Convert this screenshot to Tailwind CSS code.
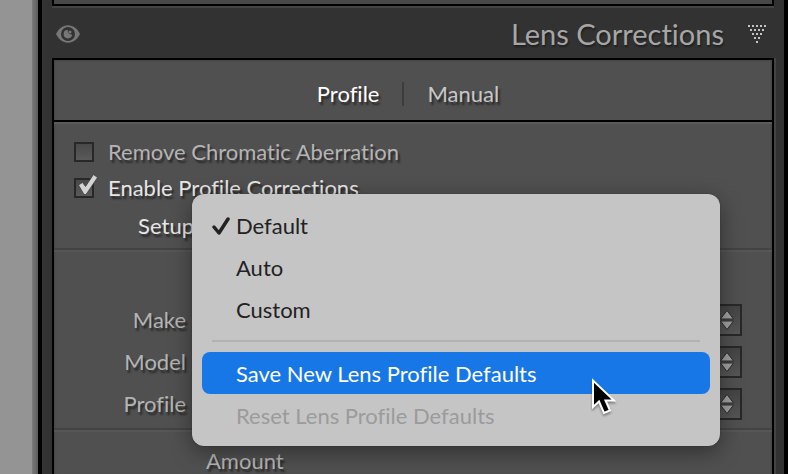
<!DOCTYPE html>
<html lang="en">
<head>
  <meta charset="UTF-8" />
  <meta name="viewport" content="width=device-width, initial-scale=1.0" />
  <title>Lens Corrections</title>
  <script src="https://cdn.jsdelivr.net/npm/@tailwindcss/browser@4"></script>
</head>
<body class="h-screen overflow-hidden flex bg-[#323232] font-['Lato','Open_Sans',sans-serif] [font-variant-ligatures:none] text-[22px] leading-[30px] text-[#b4b4b4]">

  <!-- Canvas edge -->
  <div class="w-8 shrink-0 bg-[#949494]"></div>
  <div class="w-1.5 shrink-0 bg-linear-to-r from-[#7c7c7c] to-[#5c5c5c]"></div>

  <main class="grow min-w-0 flex flex-col border-x-4 border-black px-2.5">

    <!-- Bottom of the panel above -->
    <div class="h-1.5 shrink-0 bg-[#484848] border-2 border-t-0 border-black"></div>
    <div class="h-0.5 shrink-0 bg-[#444444]"></div>

    <!-- Panel header -->
    <header class="h-[50px] shrink-0 flex items-center justify-between pt-0.5 pl-1 pr-2">
      <button type="button" aria-label="Toggle panel">
        <svg class="block w-6 h-[18px]" viewBox="0 0 24 18">
          <path d="M0 9C2.5 4 6.5 0.3 12 0.3S21.500 4 24 9C21.500 14 17.500 17.700 12 17.700S2.500 14 0 9Z" fill="#777777" />
          <circle cx="12" cy="9" r="7" fill="#323232" />
          <path d="M11.500 4.800A4.300 4.300 0 1 0 16.200 9.300C14.800 10.200 11.800 9.300 11.500 4.800Z" fill="#777777" />
          <circle cx="14" cy="7" r="1.500" fill="#777777" />
        </svg>
      </button>
      <div class="flex items-center gap-6">
        <h1 class="text-[29px] leading-9 text-[#a6a6a6] [text-shadow:1px_2px_2px_rgba(0,0,0,0.4)]">Lens Corrections</h1>
        <button type="button" aria-label="Collapse panel">
          <svg class="block w-[18px] h-[18px]" viewBox="0 0 18 18" fill="#c4c4c4">
            <path d="M0 0h2v2H0zM4 0h2v2H4zM8 0h2v2H8zM12 0h2v2h-2zM16 0h2v2h-2zM2 4h2v2H2zM6 4h2v2H6zM10 4h2v2h-2zM14 4h2v2h-2zM4 8h2v2H4zM8 8h2v2H8zM12 8h2v2h-2zM6 12h2v2H6zM10 12h2v2h-2zM8 16h2v2H8z" />
          </svg>
        </button>
      </div>
    </header>

    <!-- Panel body -->
    <section class="grow border-2 border-b-0 border-black bg-[#505050] shadow-[2px_0_0_#444444,inset_0_0_3px_#3c3c3c] [text-shadow:2px_3px_2px_rgba(0,0,0,0.5)]">
      <nav class="h-[62px] border-b-2 border-black flex items-center justify-center pt-2 pr-2.5">
        <a href="#profile" class="text-white">Profile</a>
        <span class="w-0.5 h-6 bg-[#3c3c3c] mx-[23px]"></span>
        <a href="#manual" class="text-[#c8c8c8]">Manual</a>
      </nav>

      <div class="border-t-2 border-[#5a5a5a] pt-[13px] flex flex-col gap-1.5">
        <label class="flex items-center gap-3.5 pl-5">
          <input type="checkbox" class="appearance-none size-5 border-2 border-[#282828] bg-linear-to-b from-[#494949] to-[#5a5a5a]" />
          Remove Chromatic Aberration
        </label>
        <label class="relative flex items-center gap-3.5 pl-5 text-[#e6e6e6]">
          <input type="checkbox" checked class="appearance-none size-5 border-2 border-[#282828] bg-linear-to-b from-[#494949] to-[#5a5a5a]" />
          <svg class="absolute left-6 top-0 w-5 h-6" viewBox="0 0 20 24">
            <path d="M0.500 12L4.500 9.500L7.500 13.500L15.500 1.500L19.500 4.500L8 21.500L6 21.500Z" fill="#d4d4d4" stroke="#383838" stroke-width="0.700" stroke-linejoin="round" />
          </svg>
          Enable Profile Corrections
        </label>
      </div>

      <!-- Setup with its open menu -->
      <div class="relative mt-2 pb-[7px] border-b-2 border-[#434343]">
        <span id="setup-label" class="block w-[140px] text-right text-[#e6e6e6]">Setup</span>
        <div role="menu" aria-labelledby="setup-label" class="absolute z-10 left-[138px] right-[52px] -top-[17px] p-2.5 rounded-xl bg-[#c5c5c6] text-[#222222] shadow-[0_0_1px_#222222,0_6px_22px_rgba(0,0,0,0.4)] [text-shadow:none]">
          <button type="button" role="menuitemradio" aria-checked="true" class="flex items-center w-full h-[42px] pt-0.5 pl-2.5">
            <svg class="w-6 h-5" viewBox="0 0 24 20" fill="none" stroke="#222222" stroke-width="3.500" stroke-linecap="round" stroke-linejoin="round">
              <path d="M2 11L7 17L16 3" />
            </svg>
            Default
          </button>
          <button type="button" role="menuitemradio" aria-checked="false" class="block w-full h-[42px] pt-0.5 pl-[34px] text-left">Auto</button>
          <button type="button" role="menuitemradio" aria-checked="false" class="block w-full h-[42px] pt-0.5 pl-[34px] text-left">Custom</button>
          <hr class="mx-2.5 my-2.5 border-t-2 border-[#b2b2b2]" />
          <button type="button" role="menuitem" class="relative block w-full h-[42px] pt-0.5 pl-[34px] rounded-lg bg-[#1877e6] text-left text-white">
            Save New Lens Profile Defaults
            <svg class="absolute z-10 left-[388px] top-6 w-7 h-10 drop-shadow-[0_2px_1px_rgba(0,0,0,0.35)]" viewBox="0 0 28 40">
              <path d="M3 4.500V31L9 25.500L14 37L20 34.500L15.500 24.500H24Z" fill="#000000" stroke="#ffffff" stroke-width="2" />
            </svg>
          </button>
          <button type="button" role="menuitem" disabled class="block w-full h-[42px] pt-0.5 pl-[34px] text-left text-[#9b9b9b]">Reset Lens Profile Defaults</button>
        </div>
      </div>

      <!-- Lens profile -->
      <div class="border-t-2 border-[#565656] pt-[52px] pb-2 pr-[30px] flex flex-col gap-2.5">
        <div class="flex items-center gap-2.5">
          <label for="make" class="w-[132px] text-right">Make</label>
          <div class="relative grow">
            <select id="make" class="block appearance-none w-full h-8 border-2 border-[#282828] bg-linear-to-b from-[#444444] to-[#565656]"></select>
            <svg class="absolute right-2 top-1.5 w-3.5 h-5" viewBox="0 0 14 20" fill="#a0a0a0" stroke="#2c2c2c" stroke-linejoin="round">
              <path d="M7 0.500L13.500 9H0.500ZM7 19.500L0.500 11H13.500Z" />
            </svg>
          </div>
        </div>
        <div class="flex items-center gap-2.5">
          <label for="model" class="w-[132px] text-right">Model</label>
          <div class="relative grow">
            <select id="model" class="block appearance-none w-full h-8 border-2 border-[#282828] bg-linear-to-b from-[#444444] to-[#565656]"></select>
            <svg class="absolute right-2 top-1.5 w-3.5 h-5" viewBox="0 0 14 20" fill="#a0a0a0" stroke="#2c2c2c" stroke-linejoin="round">
              <path d="M7 0.500L13.500 9H0.500ZM7 19.500L0.500 11H13.500Z" />
            </svg>
          </div>
        </div>
        <div class="flex items-center gap-2.5">
          <label for="lens-profile" class="w-[132px] text-right">Profile</label>
          <div class="relative grow">
            <select id="lens-profile" class="block appearance-none w-full h-8 border-2 border-[#282828] bg-linear-to-b from-[#444444] to-[#565656]"></select>
            <svg class="absolute right-2 top-1.5 w-3.5 h-5" viewBox="0 0 14 20" fill="#a0a0a0" stroke="#2c2c2c" stroke-linejoin="round">
              <path d="M7 0.500L13.500 9H0.500ZM7 19.500L0.500 11H13.500Z" />
            </svg>
          </div>
        </div>
      </div>

      <!-- Amount -->
      <div class="border-t-2 border-[#434343]">
        <h2 class="border-t-2 border-[#565656] pl-[152px] pt-3.5">Amount</h2>
      </div>
    </section>
  </main>

</body>
</html>
